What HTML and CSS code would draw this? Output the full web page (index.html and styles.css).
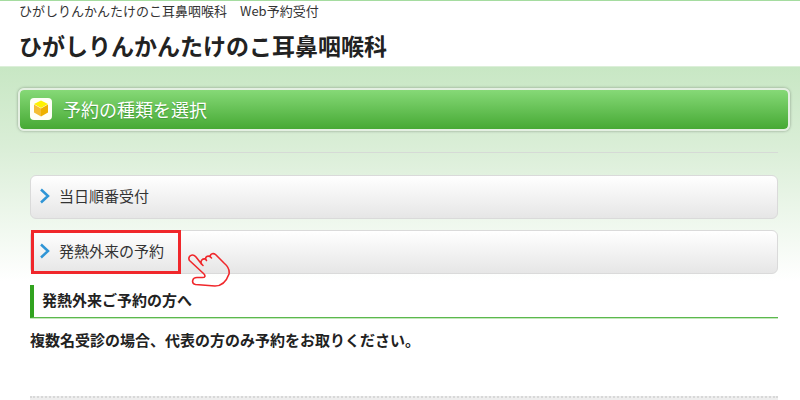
FILE: index.html
```html
<!DOCTYPE html>
<html lang="ja">
<head>
    <meta charset="UTF-8">
    <meta name="viewport" content="width=device-width, initial-scale=1.0">
    <title>ひがしりんかんたけのこ耳鼻咽喉科 Web予約受付</title>
    <link rel="stylesheet" href="styles.css">
</head>

<body>

    <header>
        <p class="site-name">ひがしりんかんたけのこ耳鼻咽喉科　Web予約受付</p>
        <h1>ひがしりんかんたけのこ耳鼻咽喉科</h1>
    </header>

    <main>
        <h2 class="title-bar">
            <svg class="cube" viewBox="0 0 22 22" aria-hidden="true">
                <rect width="22" height="22" rx="4" fill="#fffef6"/>
                <path d="M11 2.500 18 6 11 10 4 6Z" fill="#fff200"/>
                <path d="M4 6.500 11 10.500V18.500L4 14.600Z" fill="#f5bd35"/>
                <path d="M18 6.500 11 10.500V18.500L18 14.600Z" fill="#eeb000"/>
            </svg>
            予約の種類を選択
        </h2>

        <div class="content">
            <hr>
            <ul class="menu">
                <li>
                    <a href="#today">
                        <svg class="arrow" viewBox="0 0 10 16" aria-hidden="true"><path d="M1 1.5 8 8 1 14.5"/></svg>
                        当日順番受付
                    </a>
                </li>
                <li>
                    <a href="#fever">
                        <svg class="arrow" viewBox="0 0 10 16" aria-hidden="true"><path d="M1 1.5 8 8 1 14.5"/></svg>
                        発熱外来の予約
                    </a>
                    <span class="marker"></span>
                    <svg class="hand" viewBox="0 0 44 36" aria-hidden="true">
                        <path d="M13.500 12 8 5C4.500 .8 -1 4.500 1.500 8.500L15.500 21.500C18 24 17 25.500 14.500 25.500H9C4 25.500 3 31.500 7.500 32.500L27 34C34 34 38.500 29 41 22 42 17 39.500 14 36 11L27.500 2.500C25.500 .8 22.500 1.500 22 4.500 19.500 3.500 17.500 4.500 17.500 7 14.500 6.500 12 8.500 13.500 12"/>
                        <path d="M22 4.500 23.500 6M17.500 7 18.500 8.500M13.500 12 15 13.500"/>
                    </svg>
                </li>
            </ul>

            <h3>発熱外来ご予約の方へ</h3>
            <p class="note">複数名受診の場合、代表の方のみ予約をお取りください。</p>
        </div>
    </main>

    <footer></footer>

</body>
</html>
```

FILE: styles.css
```css
* {
    margin: 0;
    padding: 0;
    box-sizing: border-box;
}

body {
    display: flex;
    flex-direction: column;
    min-height: 100vh;
    border-top: 1px solid #a5dca0;
    background-color: #fff;
    color: #222;
    font-family: "Noto Sans CJK JP", sans-serif;
    font-size: 15px;
    line-height: 20px;
}

header {
    padding: 0 19px;
}

.site-name {
    font-size: 13px;
    color: #333;
}

h1 {
    padding: 7px 0 4px;
    font-size: 23px;
    line-height: 34px;
}

main {
    padding: 21px 10px 0 18px;
    border-top: 1px solid #dcefd9;
    background: linear-gradient(#c8e7c4, #daeed7 80px, #fff 214px);
}

.title-bar {
    display: flex;
    align-items: center;
    gap: 11px;
    height: 43px;
    padding: 0 10px 2px;
    border: 2px solid #e4efe2;
    border-radius: 6px;
    background: linear-gradient(#86d977, #46a934) padding-box;
    box-shadow: 0 0 3px rgba(0, 0, 0, 0.35);
    color: #fff;
    font-size: 18px;
    font-weight: normal;
    text-shadow: 0 1px 1px #46993a;
}

.cube {
    width: 22px;
    height: 22px;
}

.content {
    padding: 21px 12px 0;
}

hr {
    border: 0;
    border-top: 1px solid #d6dad6;
}

.menu {
    display: flex;
    flex-direction: column;
    gap: 11px;
    margin-top: 22px;
    list-style: none;
}

.menu li {
    position: relative;
}

.menu a {
    display: flex;
    align-items: center;
    gap: 9px;
    height: 44px;
    padding: 0 9px 2px;
    border: 1px solid #dadada;
    border-radius: 6px;
    background: linear-gradient(#fff, #e6e6e6);
    color: #333;
    text-decoration: none;
}

.arrow {
    width: 10px;
    height: 16px;
    fill: none;
    stroke: #2f95d6;
    stroke-width: 2.5;
}

/* click guide on the fever clinic item */
.marker {
    position: absolute;
    top: 0;
    left: 1px;
    width: 150px;
    height: 44px;
    border: 3px solid #f0272b;
    pointer-events: none;
}

.hand {
    position: absolute;
    top: 22px;
    left: 158px;
    width: 44px;
    height: 36px;
    fill: none;
    stroke: #f0272b;
    stroke-width: 1.6;
    stroke-linecap: round;
    stroke-linejoin: round;
    pointer-events: none;
}

h3 {
    margin-top: 11px;
    padding: 5px 8px 7px;
    border-left: 4px solid #31a31f;
    border-bottom: 1px solid #5cb84d;
    box-shadow: 0 1px #c4e8be;
    font-size: 15px;
}

.note {
    padding: 12px 0 46px;
    font-weight: bold;
}

footer {
    flex: 1;
    min-height: 4px;
    margin: 0 22px 0 30px;
    border-top: 2px dotted #d8d8d8;
    background-color: #eee;
}
```
